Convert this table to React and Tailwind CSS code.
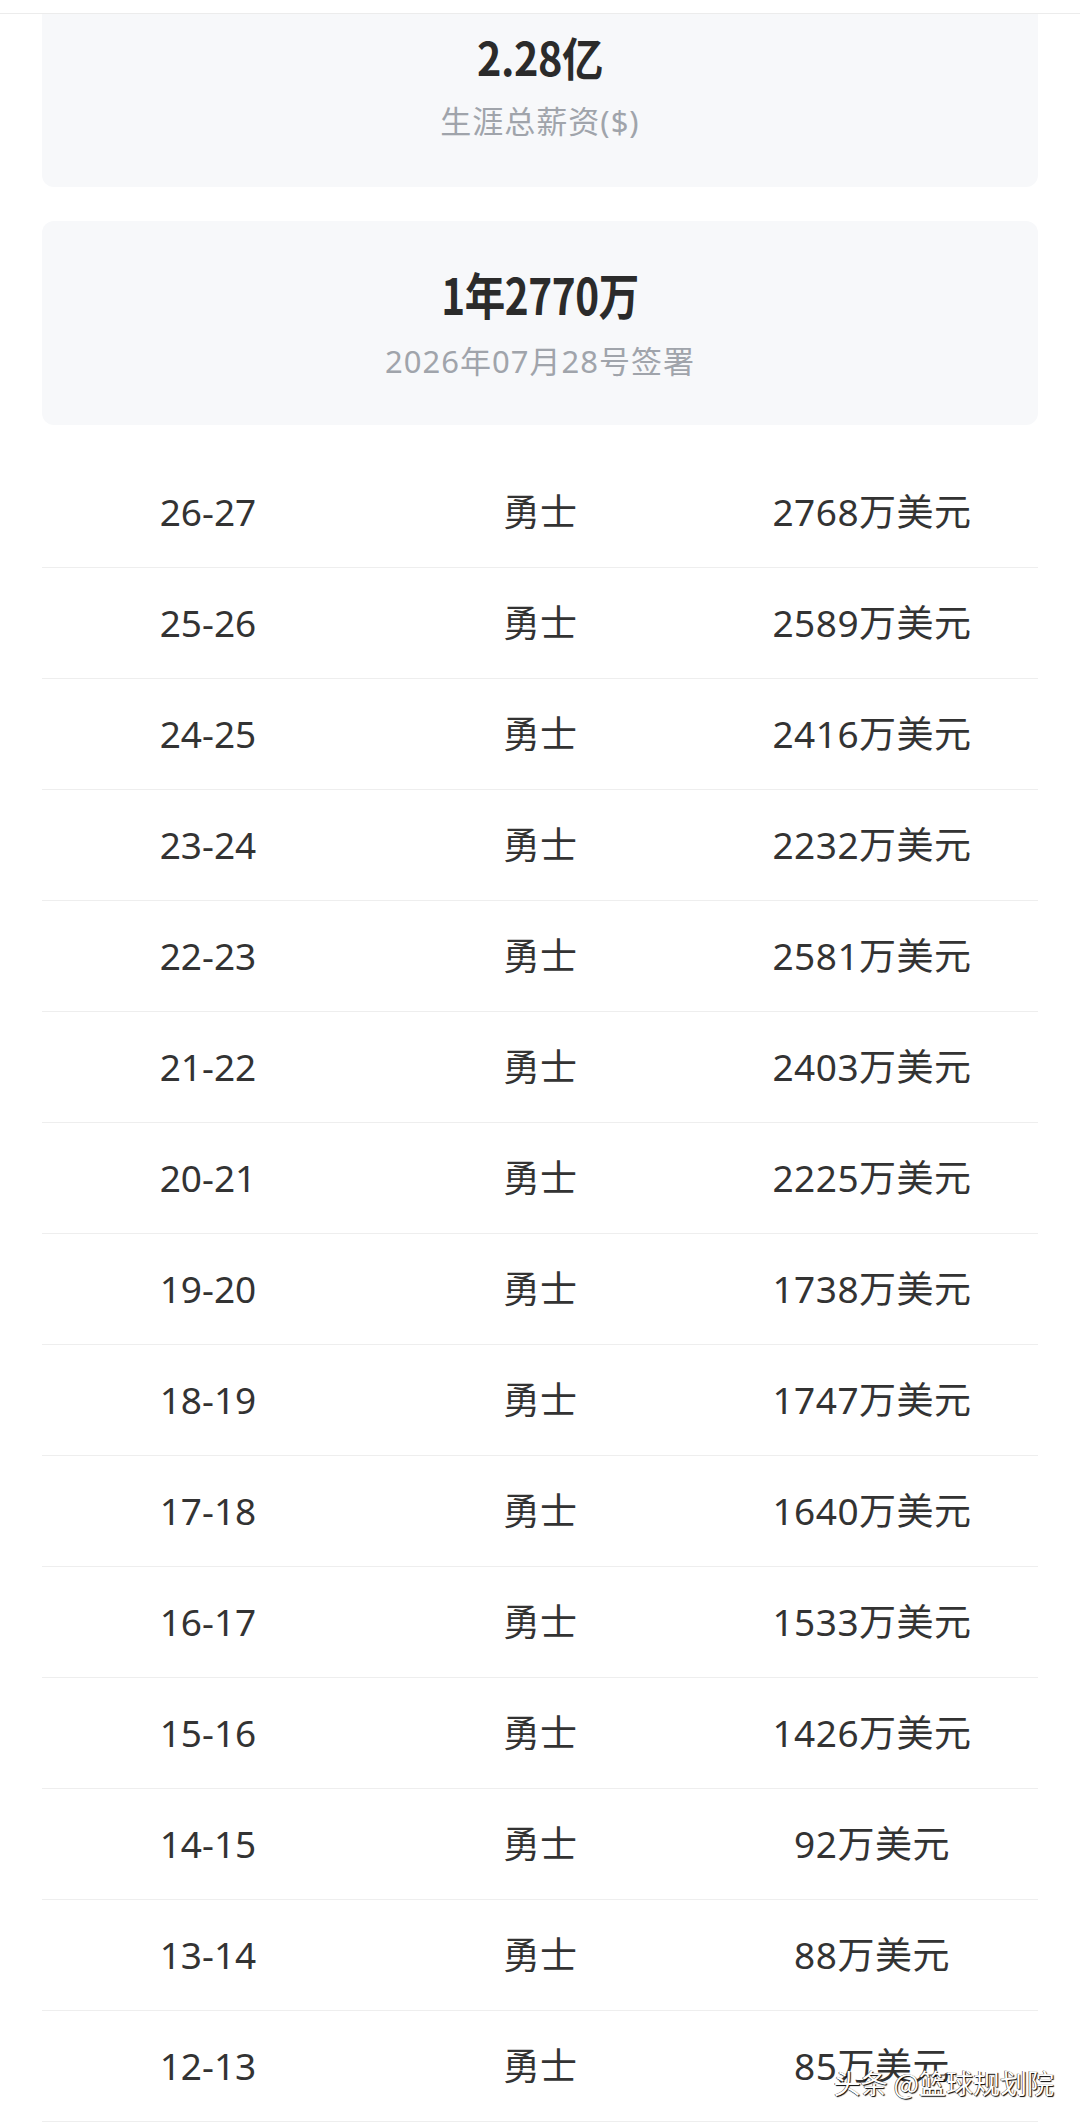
const rows = [
  ['26-27', '2768'],
  ['25-26', '2589'],
  ['24-25', '2416'],
  ['23-24', '2232'],
  ['22-23', '2581'],
  ['21-22', '2403'],
  ['20-21', '2225'],
  ['19-20', '1738'],
  ['18-19', '1747'],
  ['17-18', '1640'],
  ['16-17', '1533'],
  ['15-16', '1426'],
  ['14-15', '92'],
  ['13-14', '88'],
  ['12-13', '85'],
];

// 顶部统计卡片
function StatCard({ value, label, className, gap, size }) {
  return (
    <div className={`bg-[#f7f8fa] flex flex-col items-center ${className}`}>
      <div className={`h-[56px] flex items-center font-bold text-[#2b2b2b] tracking-[-0.5px] font-['Noto_Sans_CJK_SC',sans-serif] ${size}`}>
        {value}
      </div>
      <div className={`h-[40px] flex items-center text-[31px] tracking-[1px] text-[#a0a4ab] ${gap}`}>{label}</div>
    </div>
  );
}

export default function App() {
  return (
    <div className="relative w-[1080px] bg-white font-['Noto_Sans','Noto_Sans_CJK_SC',sans-serif] overflow-hidden">
      {/* 顶部导航底边 */}
      <div className="h-[14px] border-b border-[#ececec] bg-white"></div>

      <div className="px-[42px]">
        <StatCard
          value="2.28亿"
          label="生涯总薪资($)"
          className="h-[173px] pt-[14px] rounded-b-[12px]"
          size="text-[46px] scale-x-[0.9]"
          gap="mt-[17px]"
        />
        <StatCard
          value="1年2770万"
          label="2026年07月28号签署"
          className="mt-[34px] h-[204px] justify-center rounded-[12px]"
          size="text-[50px] scale-x-[0.81]"
          gap="mt-[20px]"
        />

        {/* 合同明细 */}
        <div className="mt-[32px]">
          {rows.map(([season, amount]) => (
            <div
              key={season}
              className="h-[111px] grid grid-cols-3 items-center border-b border-[#eeeeee] text-[37px] text-[#333333]"
            >
              <div className="text-center">{season}</div>
              <div className="text-center">勇士</div>
              <div className="text-center tracking-[0.5px]">{amount}万美元</div>
            </div>
          ))}
        </div>
      </div>

      {/* 水印 */}
      <div className="absolute right-[26px] bottom-[19px] text-[27px] text-white font-['Noto_Sans_CJK_SC',sans-serif] [text-shadow:1px_1px_1px_#000,-0.5px_-0.5px_0_#333]">
        头条 @篮球规划院
      </div>
    </div>
  );
}
